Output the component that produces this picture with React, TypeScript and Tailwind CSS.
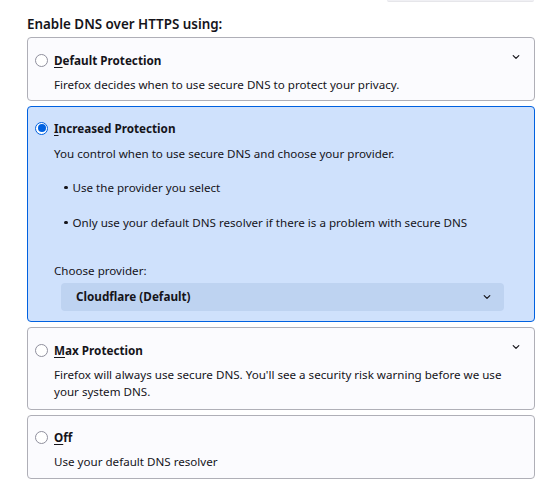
import React from "react";

const Chevron = () => (
  <svg width="10" height="10" viewBox="0 0 10 10" className="block">
    <path d="M2.2 3.6 L5 6.4 L7.8 3.6" fill="none" stroke="#15141a" strokeWidth="1.2" strokeLinecap="round" strokeLinejoin="round" />
  </svg>
);

const Radio = ({ checked }: { checked?: boolean }) =>
  checked ? (
    <span className="flex h-[13px] w-[13px] shrink-0 items-center justify-center rounded-full border-[1.5px] border-[#0061e0] bg-white">
      <span className="h-[8px] w-[8px] rounded-full bg-[#0061e0]" />
    </span>
  ) : (
    <span className="block h-[13px] w-[13px] shrink-0 rounded-full border border-[#8f8f9d] bg-white" />
  );

function Title({ accel, rest }: { accel: string; rest: string }) {
  return (
    <span className="text-[11.7px] font-bold leading-[20px] text-[#15141a]">
      <span className="underline underline-offset-2">{accel}</span>
      {rest}
    </span>
  );
}

export default function App() {
  return (
    <div
      className="min-h-[500px] w-[558px] bg-white text-[#15141a]"
      style={{ fontFamily: '"Noto Sans", "Open Sans", sans-serif' }}
    >
      <div className="flex justify-end pr-[24px]">
        <div className="h-[2px] w-[147px] rounded-b-[3px] border-b border-[#e6e6ea] bg-[#f0f0f4]" />
      </div>
      <div className="pl-[27px] pr-[23px]">
        <h2 className="mt-[12px] text-[13.4px] font-semibold leading-[20px]">Enable DNS over HTTPS using:</h2>

        <div className="mt-[3px] flex flex-col gap-[5px]">
          {/* Default */}
          <div className="relative rounded-[4px] border border-[#afafb7] bg-[#fbfbfe] pb-[7px] pl-[7px] pr-[14px] pt-[12px]">
            <div className="flex items-center gap-[6px]">
              <Radio />
              <Title accel="D" rest="efault Protection" />
            </div>
            <div className="absolute right-[13px] top-[14px]">
              <Chevron />
            </div>
            <p className="mt-[6px] pl-[19px] text-[11.6px] leading-[17px]">
              Firefox decides when to use secure DNS to protect your privacy.
            </p>
          </div>

          {/* Increased */}
          <div className="rounded-[4px] border border-[#0061e0] bg-[#cfe1fc] pb-[10px] pl-[7px] pr-[30px] pt-[11px]">
            <div className="flex items-center gap-[6px]">
              <Radio checked />
              <Title accel="I" rest="ncreased Protection" />
            </div>
            <div className="pl-[19px]">
              <p className="mt-[7px] text-[11.6px] leading-[17px]">
                You control when to use secure DNS and choose your provider.
              </p>
              <ul className="mt-[17px] flex flex-col gap-[18px] pl-[10px] text-[11.6px] leading-[17px]">
                <li className="flex items-center gap-[5px]">
                  <span className="h-[3.5px] w-[3.5px] shrink-0 rounded-full bg-[#15141a]" />
                  Use the provider you select
                </li>
                <li className="flex items-center gap-[5px]">
                  <span className="h-[3.5px] w-[3.5px] shrink-0 rounded-full bg-[#15141a]" />
                  Only use your default DNS resolver if there is a problem with secure DNS
                </li>
              </ul>
              <p className="mt-[31px] text-[11.6px] leading-[17px]">Choose provider:</p>
              <div className="ml-[7px] mt-[4px] flex h-[28px] items-center justify-between rounded-[4px] bg-[#bed3f1] pl-[15px] pr-[12px]">
                <span className="text-[11.7px] font-bold">Cloudflare (Default)</span>
                <Chevron />
              </div>
            </div>
          </div>

          {/* Max */}
          <div className="relative rounded-[4px] border border-[#afafb7] bg-[#fbfbfe] pb-[9px] pl-[7px] pr-[30px] pt-[12px]">
            <div className="flex items-center gap-[6px]">
              <Radio />
              <Title accel="M" rest="ax Protection" />
            </div>
            <div className="absolute right-[13px] top-[14px]">
              <Chevron />
            </div>
            <p className="mt-[6px] pl-[19px] text-[11.6px] leading-[17px]">
              Firefox will always use secure DNS. You'll see a security risk warning before we use your system DNS.
            </p>
          </div>

          {/* Off */}
          <div className="rounded-[4px] border border-[#afafb7] bg-[#fbfbfe] pb-[8px] pl-[7px] pr-[14px] pt-[11px]">
            <div className="flex items-center gap-[6px]">
              <Radio />
              <Title accel="O" rest="ff" />
            </div>
            <p className="mt-[6px] pl-[19px] text-[11.6px] leading-[17px]">Use your default DNS resolver</p>
          </div>
        </div>
      </div>
    </div>
  );
}
